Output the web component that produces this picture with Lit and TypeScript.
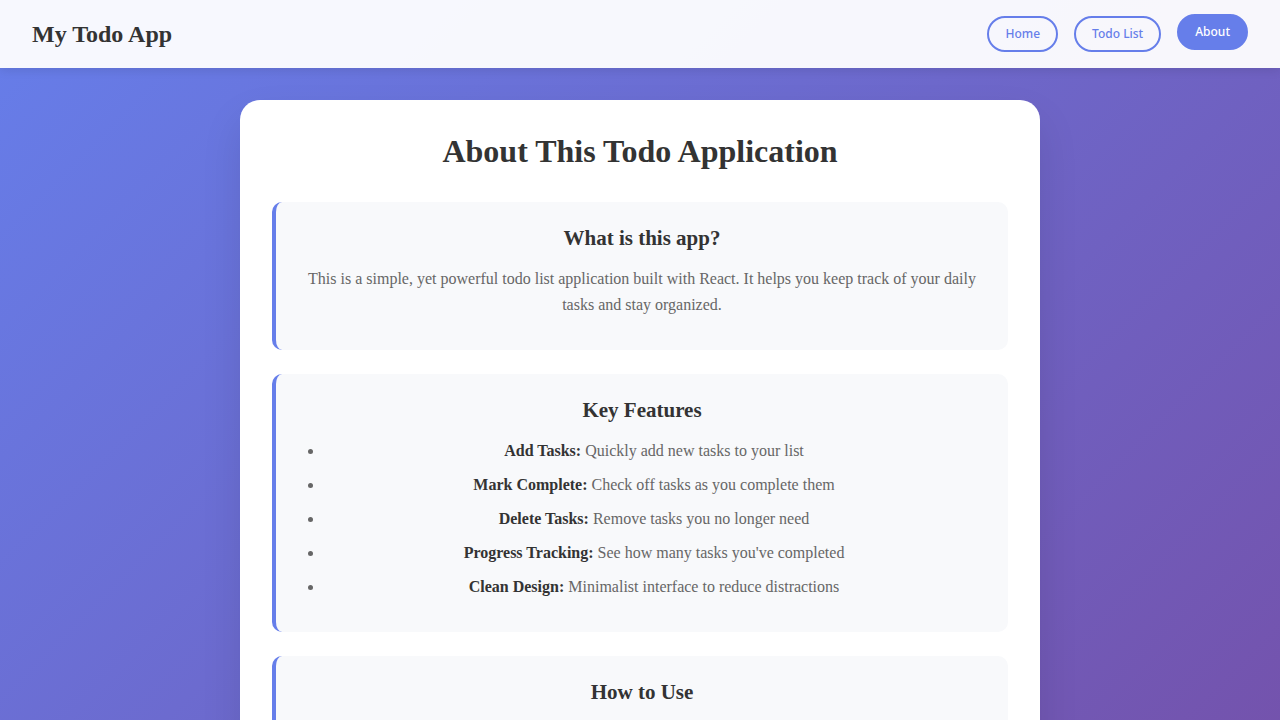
import { LitElement, html, css } from "lit";
import { customElement, state } from "lit/decorators.js";

const PAGES = ["Home", "Todo List", "About"];

const FEATURES = [
  ["Add Tasks:", "Quickly add new tasks to your list"],
  ["Mark Complete:", "Check off tasks as you complete them"],
  ["Delete Tasks:", "Remove tasks you no longer need"],
  ["Progress Tracking:", "See how many tasks you've completed"],
  ["Clean Design:", "Minimalist interface to reduce distractions"],
];

@customElement("app-root")
export class AppRoot extends LitElement {
  @state() page = "About";

  static styles = css`
    * {
      box-sizing: border-box;
    }
    :host {
      display: block;
      height: 100vh;
      overflow: hidden;
      font-family: "Liberation Serif", serif;
      color: #333;
      text-align: center;
      background: linear-gradient(135deg, #667eea 0%, #764ba2 100%) 0 0 / 100%
        150vh;
    }
    .bar {
      display: flex;
      justify-content: space-between;
      align-items: center;
      padding: 16px 32px;
      background: rgba(255, 255, 255, 0.95);
      box-shadow: 0 2px 10px rgba(0, 0, 0, 0.1);
    }
    .brand {
      margin: 0;
      font-size: 24px;
      line-height: 28px;
    }
    .nav {
      display: flex;
      gap: 16px;
    }
    .link {
      padding: 8px 16px;
      border: 2px solid #667eea;
      border-radius: 25px;
      background: transparent;
      color: #667eea;
      font: 500 12px/16px "Noto Sans", sans-serif;
      cursor: pointer;
    }
    .active {
      background: #667eea;
      color: #fff;
      transform: translateY(-2px);
    }
    .main {
      padding: 32px;
    }
    .card {
      max-width: 800px;
      margin: 0 auto;
      padding: 32px;
      border-radius: 20px;
      background: #fff;
      box-shadow: 0 20px 40px rgba(0, 0, 0, 0.1);
    }
    .title {
      margin: 0 0 32px;
      font-size: 32px;
      line-height: 38px;
    }
    .section {
      margin-bottom: 24px;
      padding: 24px;
      border-left: 4px solid #667eea;
      border-radius: 10px;
      background: #f8f9fb;
    }
    .heading {
      margin: 0 0 16px;
      font-size: 21px;
      line-height: 24px;
    }
    .text {
      margin: 0 0 8px;
      font-size: 16px;
      line-height: 26px;
      color: #666;
    }
    .list {
      margin: 0;
      padding: 0 0 0 24px;
      font-size: 16px;
      line-height: 26px;
      color: #666;
    }
    .item {
      margin-bottom: 8px;
    }
    .term {
      color: #333;
    }
  `;

  render() {
    return html`
      <header class="bar">
        <h2 class="brand">My Todo App</h2>
        <nav class="nav">
          ${PAGES.map(
            (p) => html`<button
              class="link ${p === this.page ? "active" : ""}"
              @click=${() => (this.page = p)}
            >${p}</button>`
          )}
        </nav>
      </header>
      <main class="main">
        <div class="card">
          <h1 class="title">About This Todo Application</h1>
          <section class="section">
            <h3 class="heading">What is this app?</h3>
            <p class="text">
              This is a simple, yet powerful todo list application built with
              React. It helps you keep track of your daily tasks and stay
              organized.
            </p>
          </section>
          <section class="section">
            <h3 class="heading">Key Features</h3>
            <ul class="list">
              ${FEATURES.map(
                ([term, text]) => html`<li class="item">
                  <strong class="term">${term}</strong> ${text}
                </li>`
              )}
            </ul>
          </section>
          <section class="section">
            <h3 class="heading">How to Use</h3>
          </section>
        </div>
      </main>
    `;
  }
}
